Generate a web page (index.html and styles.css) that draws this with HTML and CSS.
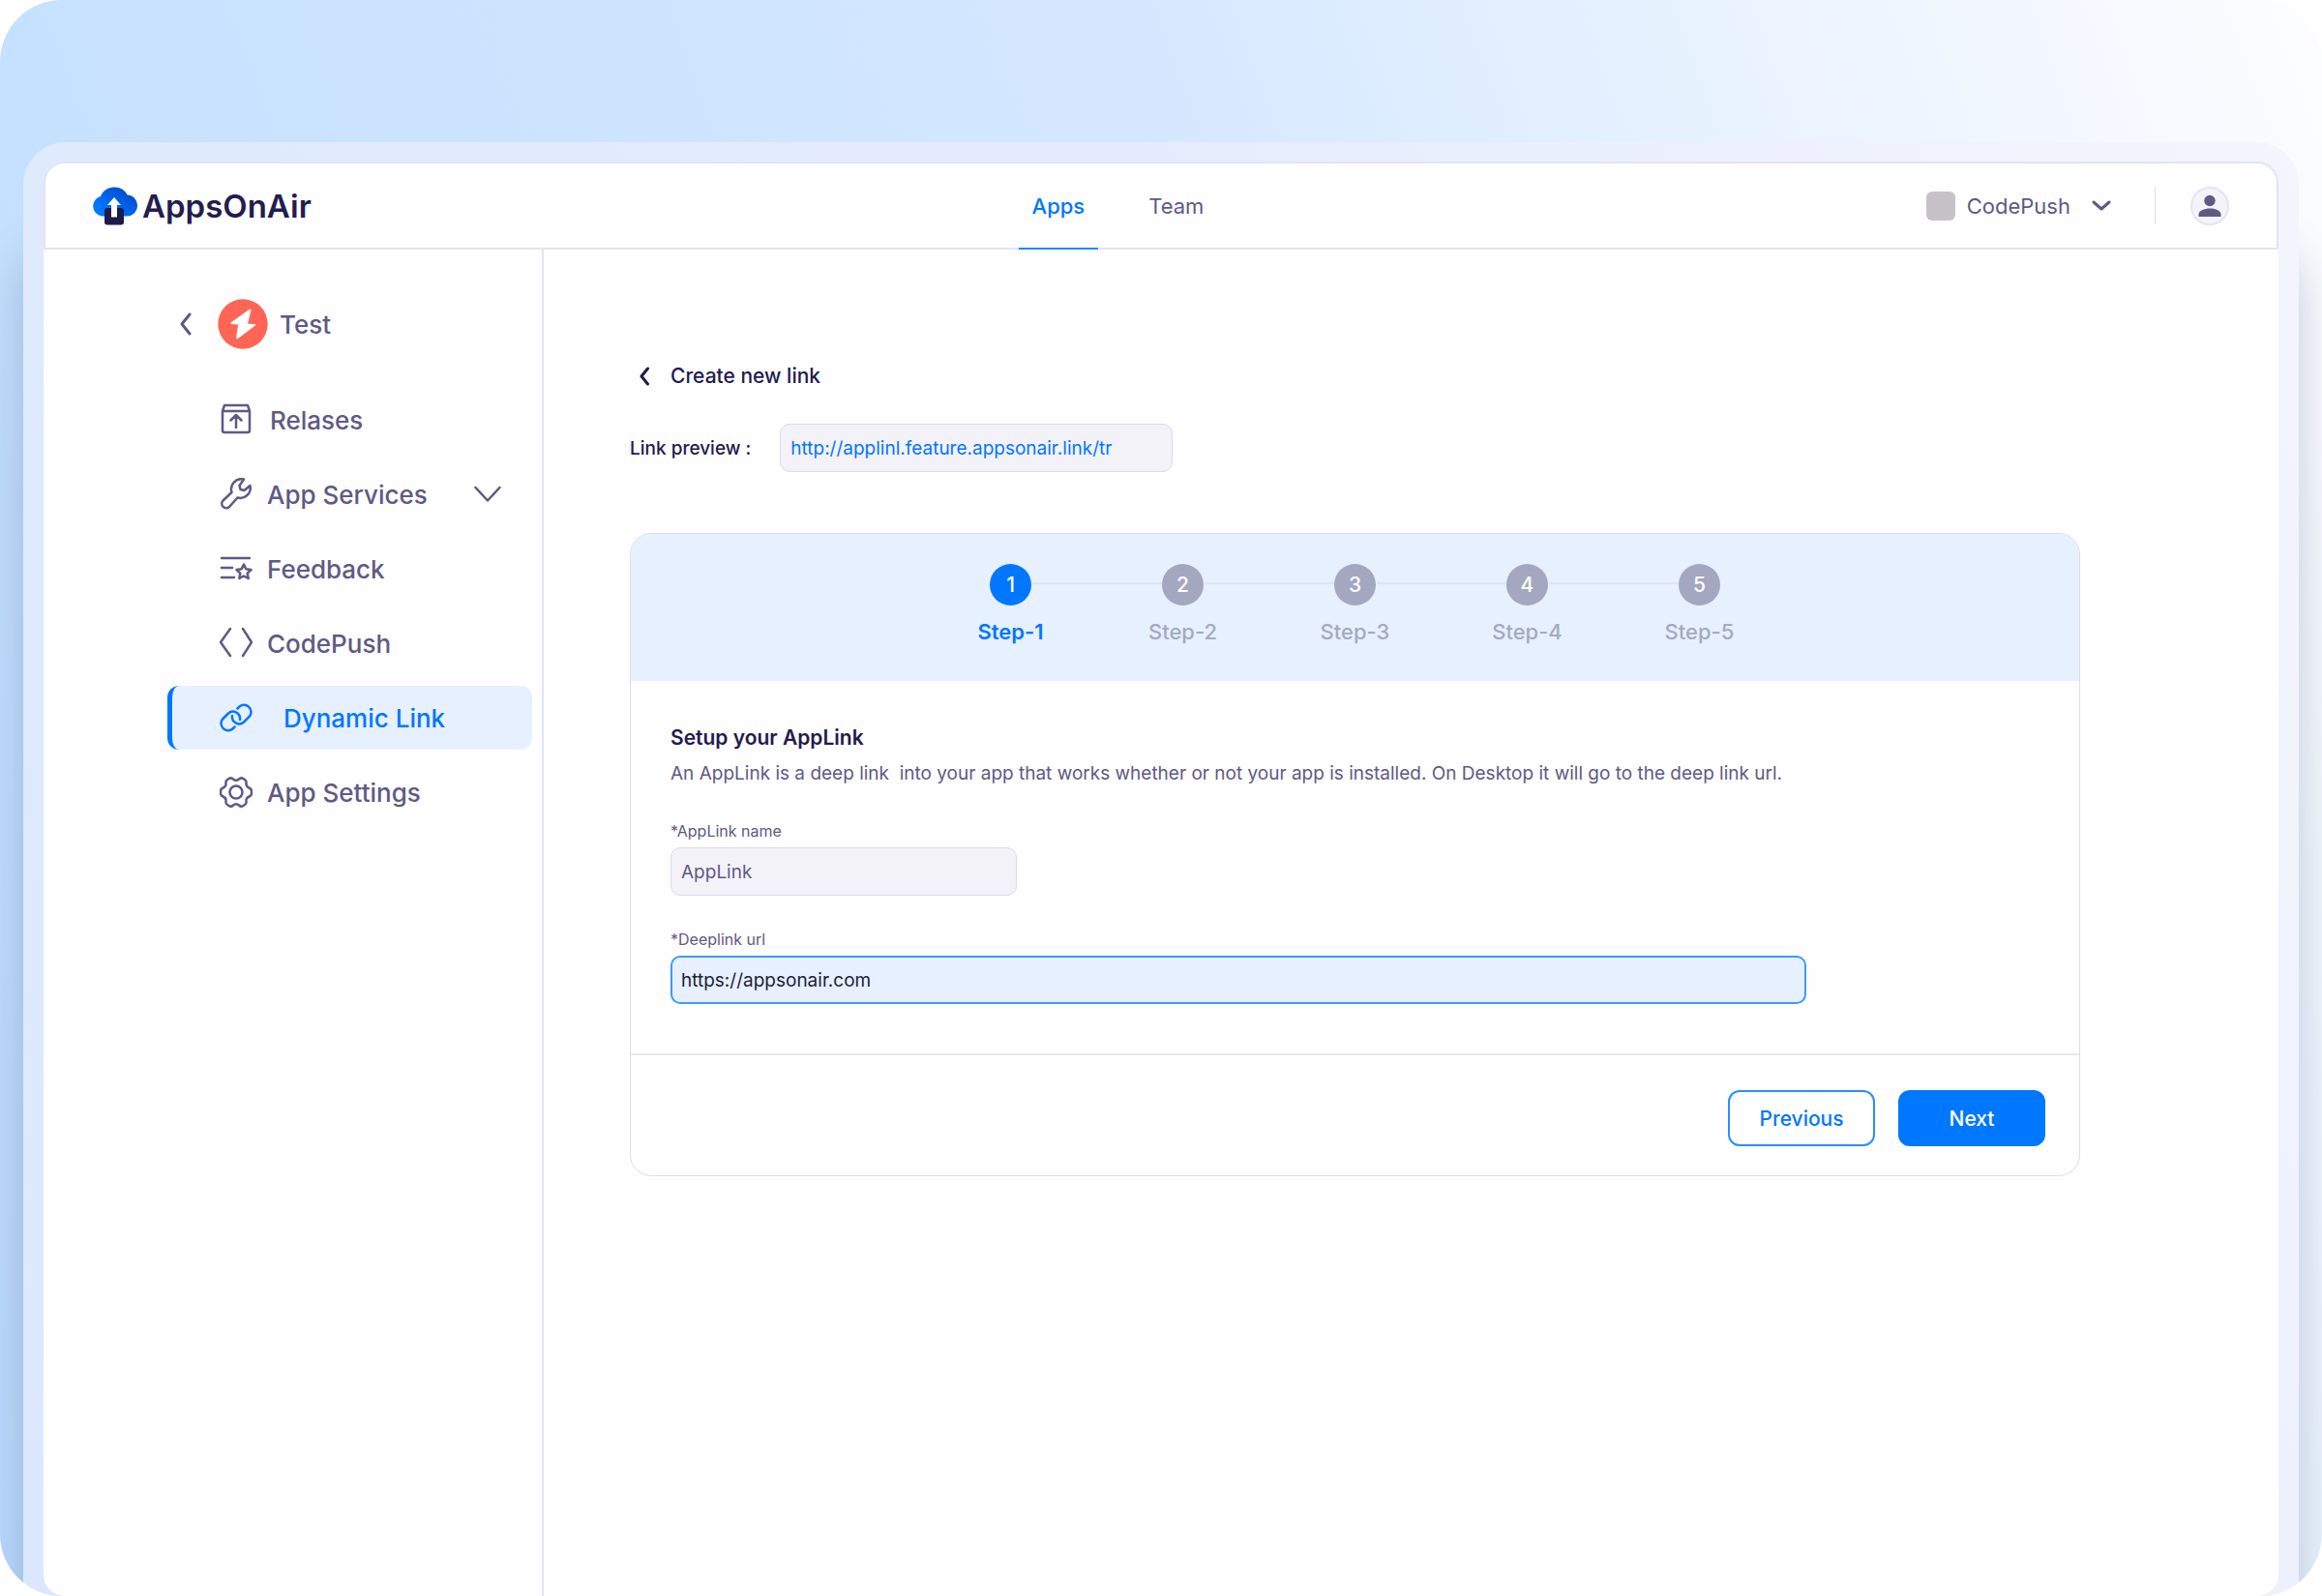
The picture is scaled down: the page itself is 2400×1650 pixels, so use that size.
FILE: index.html
```html
<!DOCTYPE html>
<html lang="en">
<head>
    <meta charset="UTF-8">
    <meta name="viewport" content="width=device-width, initial-scale=1.0">
    <title>AppsOnAir - Create new link</title>
    <link rel="stylesheet" href="styles.css">
</head>
<body>
    <div class="stage">
        <div class="frame">
            <div class="app">
                <header class="topbar">
                    <a href="#" class="brand">
                        <svg class="brand-logo" width="48" height="40" viewBox="0 0 48 40">
                            <defs>
                                <linearGradient id="cloud" x1="0" y1="1" x2="1" y2="0">
                                    <stop offset="0.2" stop-color="#0077ff"/>
                                    <stop offset="1" stop-color="#0040c4"/>
                                </linearGradient>
                            </defs>
                            <path fill="url(#cloud)" d="M11 30.500a10.500 10.500 0 0 1-1-20.500C12 4.500 17.500.500 24 .500S35.500 4 37.500 8.500A11 11 0 0 1 36.500 30.500z"/>
                            <rect x="14" y="22" width="20" height="17.500" rx="3" fill="#1d1b47"/>
                            <path fill="#fff" d="M24 11l7 8h-4v12.500h-6V19h-4z"/>
                        </svg>
                        <span>AppsOnAir</span>
                    </a>

                    <nav class="tabs">
                        <a href="#" class="tab active">Apps</a>
                        <a href="#" class="tab">Team</a>
                    </nav>

                    <div class="account">
                        <button type="button" class="app-switch">
                            <span class="app-swatch"></span>
                            CodePush
                            <svg width="20" height="12" viewBox="0 0 20 12"><path d="M2 2l8 7 8-7"/></svg>
                        </button>
                        <button type="button" class="avatar" aria-label="Profile">
                            <svg width="24" height="24" viewBox="0 0 24 24"><circle cx="12" cy="6.500" r="5.700"/><path d="M.500 23v-2.500C.500 17 6.500 14.500 12 14.500s11.500 2.500 11.500 6V23z"/></svg>
                        </button>
                    </div>
                </header>

                <div class="body">
                    <aside class="sidebar">
                        <div class="project">
                            <a href="#" class="back" aria-label="Back">
                                <svg width="14" height="26" viewBox="0 0 14 26"><path d="M12 3L4 13l8 10"/></svg>
                            </a>
                            <svg class="project-icon" width="52" height="52" viewBox="0 0 52 52">
                                <circle cx="26" cy="26" r="25.700" fill="#ff6554"/>
                                <path fill="#fff" stroke="#fff" stroke-width="2" stroke-linejoin="round" d="M33.500 11.500L14.500 25l12 1.200L30 26zM38 27l-18 13.500L22 28l5-1.500z"/>
                            </svg>
                            <span>Test</span>
                        </div>

                        <nav class="menu">
                            <a href="#" class="menu-item">
                                <svg width="34" height="34" viewBox="0 0 34 34"><path d="M3 8v20q0 2 2 2h24q2 0 2-2V8zM3 8l2-6h24l2 6M17 25V12M11.500 17.500L17 12l5.500 5.500"/></svg>
                                <span class="indent">Relases</span>
                            </a>
                            <a href="#" class="menu-item">
                                <svg width="34" height="34" viewBox="0 0 34 34"><path d="M25 1.500A10.500 10.500 0 0 0 12.500 15L3.500 23.500a4.600 4.600 0 0 0 6.500 6.500L18.500 20.500A10.500 10.500 0 0 0 31.500 8L25.500 13l-4-1-1-4z"/></svg>
                                <span>App Services</span>
                                <svg class="caret" width="28" height="18" viewBox="0 0 28 18"><path d="M1.500 2L14 15.500 26.500 2"/></svg>
                            </a>
                            <a href="#" class="menu-item">
                                <svg width="34" height="34" viewBox="0 0 34 34"><path d="M2 6h29M2 16h11M2 26h13M25 12.500l2.300 4.800 5.200.7-3.800 3.600 1 5.400-4.700-2.500-4.700 2.500 1-5.400-3.800-3.600 5.200-.7z"/></svg>
                                <span>Feedback</span>
                            </a>
                            <a href="#" class="menu-item">
                                <svg width="34" height="34" viewBox="0 0 34 34"><path d="M11 2L1 16l10 14M24 2l9 14-9 14"/></svg>
                                <span>CodePush</span>
                            </a>
                            <a href="#" class="menu-item active">
                                <svg width="34" height="34" viewBox="0 0 34 34"><path d="M15.500 26.500l-2 2a7.300 7.300 0 0 1-10.500-10L9 12.500a7.300 7.300 0 0 1 12 6.500M18.500 7.500l2-2a7.300 7.300 0 0 1 10.500 10L25 21.500A7.300 7.300 0 0 1 13 15"/></svg>
                                <span>Dynamic Link</span>
                            </a>
                            <a href="#" class="menu-item">
                                <svg width="34" height="34" viewBox="0 0 34 34"><circle cx="17" cy="17" r="6.500"/><path d="M14 3.500Q17 6 20 3.500Q22 1.500 24.500 3L26 4Q28 5.500 27.500 8Q27 11 30.500 12.500Q33 13.500 33 16V18Q33 20.500 30.500 21.500Q27 23 27.500 26Q28 28.500 26 30L24.500 31Q22 32.500 20 30.500Q17 28 14 30.500Q12 32.500 9.500 31L8 30Q6 28.500 6.500 26Q7 23 3.500 21.500Q1 20.500 1 18V16Q1 13.500 3.500 12.500Q7 11 6.500 8Q6 5.500 8 4L9.500 3Q12 1.500 14 3.500z"/></svg>
                                <span>App Settings</span>
                            </a>
                        </nav>
                    </aside>

                    <main class="content">
                        <h1 class="page-title">
                            <a href="#" aria-label="Back">
                                <svg width="12" height="20" viewBox="0 0 12 20"><path d="M9.500 2L3 10l6.500 8"/></svg>
                            </a>
                            Create new link
                        </h1>

                        <div class="preview">
                            <label for="preview">Link preview :</label>
                            <input type="text" id="preview" class="input link" value="http://applinl.feature.appsonair.link/tr" readonly>
                        </div>

                        <form class="card">
                            <ol class="steps">
                                <li class="step active"><span class="dot">1</span>Step-1</li>
                                <li class="step"><span class="dot">2</span>Step-2</li>
                                <li class="step"><span class="dot">3</span>Step-3</li>
                                <li class="step"><span class="dot">4</span>Step-4</li>
                                <li class="step"><span class="dot">5</span>Step-5</li>
                            </ol>

                            <div class="card-body">
                                <h2>Setup your AppLink</h2>
                                <p>An AppLink is a deep link&nbsp; into your app that works whether or not your app is installed. On Desktop it will go to the deep link url.</p>

                                <div class="field">
                                    <label for="name">*AppLink name</label>
                                    <input type="text" id="name" class="input short" value="AppLink">
                                </div>
                                <div class="field">
                                    <label for="url">*Deeplink url</label>
                                    <input type="text" id="url" class="input focused" value="https://appsonair.com">
                                </div>
                            </div>

                            <div class="card-footer">
                                <button type="button" class="btn btn-outline">Previous</button>
                                <button type="button" class="btn">Next</button>
                            </div>
                        </form>
                    </main>
                </div>
            </div>
        </div>
    </div>
</body>
</html>
```
FILE: styles.css
```css
* {
    margin: 0;
    padding: 0;
    box-sizing: border-box;
}

body {
    font-family: Inter, 'Liberation Sans', sans-serif;
    font-size: 22px;
    color: #5f5a84;
    background: #fff;
}

a {
    color: inherit;
    text-decoration: none;
}

button,
input {
    font: inherit;
    color: inherit;
}

svg {
    display: block;
    flex: none;
    fill: none;
    stroke: currentColor;
    stroke-width: 2;
    stroke-linecap: round;
    stroke-linejoin: round;
}

.stage {
    display: flex;
    min-height: 100vh;
    padding: 147px 24px 0;
    border-radius: 64px;
    overflow: hidden;
    background: linear-gradient(70deg, #bbd9ff 0%, #c6e1ff 20%, #d5e7ff 58%, #e1efff 71%, #f0f6ff 86%, #fdfdff 100%);
}

.frame {
    flex: 1;
    display: flex;
    padding: 20px 21px 0;
    border-radius: 44px 44px 0 0;
    background: rgba(240, 240, 252, 0.6);
    box-shadow: 0 110px 48px rgba(20, 40, 70, 0.22);
}

.app {
    flex: 1;
    display: flex;
    flex-direction: column;
    border-radius: 22px;
    background: #fefefe;
}

/* top bar */
.topbar {
    display: grid;
    grid-template-columns: 13fr 17fr;
    height: 91px;
    padding: 0 47px;
    border: 2px solid #e2e3f3;
    border-radius: 22px 22px 0 0;
    position: relative;
}

.brand {
    display: flex;
    align-items: center;
    gap: 5px;
    font-size: 33px;
    font-weight: 600;
    color: #231d4f;
}

.brand-logo {
    stroke: none;
}

.tabs {
    display: flex;
    gap: 38px;
    margin-bottom: -2px;
}

.tab {
    display: flex;
    align-items: center;
    padding: 0 14px;
    border-bottom: 2px solid transparent;
}

.tab.active {
    color: #0077ff;
    font-weight: 500;
    border-color: #2289ff;
}

.account {
    position: absolute;
    top: 0;
    right: 49px;
    height: 100%;
    display: flex;
    align-items: center;
}

.app-switch {
    display: flex;
    align-items: center;
    gap: 12px;
    height: 39px;
    padding-right: 45px;
    background: none;
    border: 0;
    border-right: 1px solid #dedcee;
}

.app-switch svg {
    margin-left: 10px;
    stroke-width: 3;
}

.app-swatch {
    width: 30px;
    height: 30px;
    border-radius: 6px;
    background: #c5c3c6;
}

.avatar {
    display: grid;
    place-items: center;
    width: 40px;
    height: 40px;
    margin-left: 36px;
    border: 2px solid #e6e4f3;
    border-radius: 50%;
    background: #f4f3f9;
}

.avatar svg {
    fill: currentColor;
    stroke: none;
}

.body {
    flex: 1;
    display: flex;
}

/* sidebar */
.sidebar {
    width: 517px;
    padding: 51px 10px 0 128px;
    border-right: 2px solid #e2e3f5;
    font-size: 26px;
    font-weight: 500;
}

.project {
    display: flex;
    align-items: center;
    padding-left: 11px;
}

.back svg {
    stroke-width: 3;
}

.project-icon {
    margin: 0 12px 0 27px;
    stroke: none;
}

.menu {
    display: flex;
    flex-direction: column;
    gap: 11px;
    margin-top: 40px;
}

.menu-item {
    display: flex;
    align-items: center;
    gap: 15px;
    height: 66px;
    padding: 0 32px 0 49px;
    border-left: 5px solid transparent;
    border-radius: 12px;
}

.menu-item svg {
    stroke-width: 2.5;
}

.menu-item .indent {
    padding-left: 3px;
}

.menu-item .caret {
    margin-left: auto;
}

.menu-item.active {
    gap: 32px;
    color: #0077ff;
    background: #e7f0ff;
    border-color: #0077ff;
}

/* content */
.content {
    flex: 1;
    padding: 112px 205px 0 89px;
}

.page-title {
    display: flex;
    align-items: center;
    gap: 21px;
    padding-left: 9px;
    font-size: 21px;
    line-height: 38px;
    font-weight: 500;
    color: #231a4f;
}

.page-title svg {
    stroke-width: 3;
}

.preview {
    display: flex;
    align-items: center;
    gap: 30px;
    margin: 30px 0 63px;
    font-size: 19px;
    font-weight: 500;
    color: #231a4f;
}

.input {
    display: block;
    width: 83%;
    height: 50px;
    padding: 0 10px;
    border: 1px solid #dcd9ec;
    border-radius: 10px;
    background: #f4f2f9;
    font-size: 19px;
    font-weight: 400;
    outline: none;
}

.input.link {
    width: 406px;
    color: #0077ff;
}

.input.short {
    width: 358px;
}

.input.focused {
    padding: 0 9px;
    color: #1c2238;
    background: #e7f0ff;
    border: 2px solid #3d98ff;
}

.card {
    border: 1px solid #dddced;
    border-radius: 22px;
    overflow: hidden;
}

.steps {
    display: flex;
    justify-content: center;
    height: 152px;
    padding-top: 31px;
    list-style: none;
    background: #e7f0ff;
}

.step {
    position: relative;
    width: 178px;
    text-align: center;
    font-weight: 500;
    line-height: 28px;
    color: #a3aabf;
}

.step + .step::before {
    content: '';
    position: absolute;
    top: 19px;
    right: 111px;
    width: 134px;
    height: 2px;
    background: #dfe2f0;
}

.dot {
    display: block;
    width: 43px;
    height: 43px;
    margin: 0 auto 13px;
    border-radius: 50%;
    font-size: 21px;
    line-height: 43px;
    color: #fff;
    background: #a3a7c0;
}

.step.active {
    font-weight: 600;
    color: #0077ff;
}

.step.active .dot {
    font-weight: 500;
    background: #0077ff;
}

.card-body {
    padding: 42px 41px 51px;
}

.card-body h2 {
    font-size: 21px;
    line-height: 34px;
    font-weight: 600;
    color: #231a4f;
}

.card-body p {
    margin: 4px 0 32px;
    font-size: 19px;
    line-height: 32px;
}

.field + .field {
    margin-top: 34px;
}

.field label {
    display: block;
    padding-bottom: 6px;
    font-size: 16px;
    line-height: 22px;
}

.card-footer {
    display: flex;
    justify-content: flex-end;
    gap: 24px;
    padding: 36px 35px 30px;
    border-top: 2px solid #e8e7ef;
}

.btn {
    width: 152px;
    height: 58px;
    border: 2px solid #0077ff;
    border-radius: 12px;
    font-size: 21px;
    font-weight: 500;
    color: #fff;
    background: #0077ff;
    cursor: pointer;
}

.btn-outline {
    color: #0077ff;
    background: #fff;
    border-color: #2b8eff;
}
```
